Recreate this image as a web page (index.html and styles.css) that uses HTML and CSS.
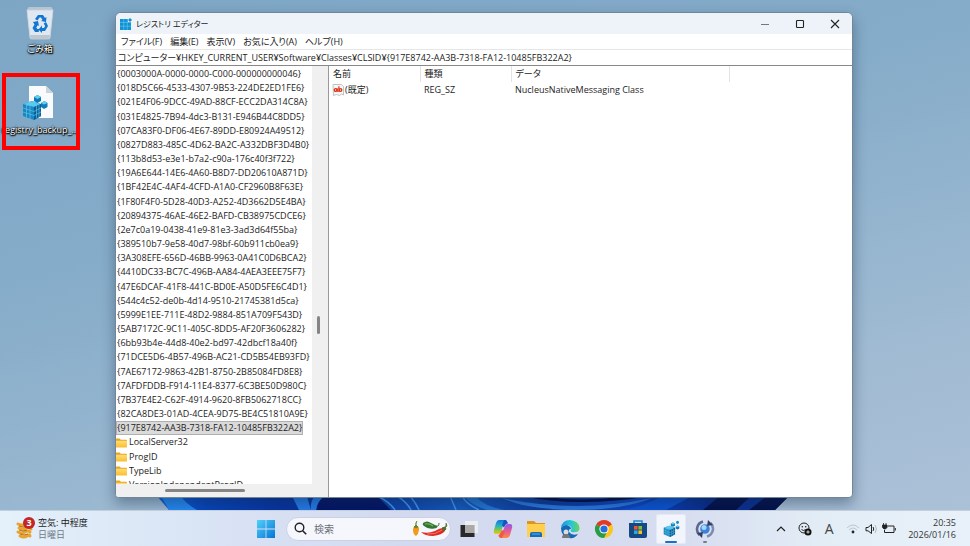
FILE: index.html
```html
<!DOCTYPE html>
<html lang="ja">
<head>
<meta charset="utf-8">
<title>レジストリ エディター</title>
<link rel="stylesheet" href="styles.css">
</head>
<body>
<svg class="defs" width="0" height="0" aria-hidden="true">
  <defs>
    <linearGradient id="folderFill" x1="0" y1="0" x2="0" y2="1"><stop offset="0" stop-color="#ffdc7a"/><stop offset="1" stop-color="#fbbf2d"/></linearGradient>
    <symbol id="cube" viewBox="0 0 24 24">
      <path d="M1 11l8-3 8 3v9l-7 4-9-4z" fill="#1686c0"/>
      <path d="M1 11l8-3 8 3-7 3z" fill="#52c3ec"/>
      <path d="M10 14l7-3v9l-7 4z" fill="#0a5f96"/>
      <path d="M4 12v9M7 13v10M1 14l9 4 7-4M1 17l9 4 7-4M12.300 13v10M14.700 12v9M6 9l8 3M12 9l-8 3" stroke="#7bd0f0" stroke-width=".5" fill="none"/>
      <path d="M11 5l3-1.500 3 1.500v3l-3 1.500L11 8z" fill="#1583bd"/><path d="M11 5l3-1.500 3 1.500-3 1.500z" fill="#63d0f4"/>
      <path d="M18 9l2.500-1.200L23 9v3l-2.500 1.500L18 12z" fill="#1174ad"/><path d="M18 9l2.500-1.200L23 9l-2.500 1.300z" fill="#63d0f4"/>
      <path d="M18.500 2l2-1 2 1v2.500l-2 1-2-1z" fill="#188dc8"/>
    </symbol>
    <symbol id="folder" viewBox="0 0 12 11">
      <path d="M0 1.500Q0 1 .6 1H4l1.200 1.500h6Q12 2.500 12 3v7q0 .8-.8.8H.8Q0 10.800 0 10z" fill="#e9a421"/>
      <path d="M0 3.500h12V10q0 .8-.8.8H.8Q0 10.800 0 10z" fill="url(#folderFill)"/>
    </symbol>
  </defs>
</svg>

<main class="desktop">
  <svg class="bloom" viewBox="0 0 632 14" preserveAspectRatio="none" aria-hidden="true">
    <defs>
      <linearGradient id="bloomBase"><stop offset="0" stop-color="#0b62df"/><stop offset=".08" stop-color="#0644ba"/><stop offset=".2" stop-color="#0733a0"/><stop offset=".3" stop-color="#08349f"/><stop offset=".48" stop-color="#1459bc"/><stop offset=".62" stop-color="#0b379a"/><stop offset=".76" stop-color="#0b45c5"/><stop offset="1" stop-color="#03104c"/></linearGradient>
    </defs>
    <path d="M0 0h632L618 14H12z" fill="url(#bloomBase)"/>
    <path d="M4 0h20q4 7 16 14H12z" fill="#2488f2"/>
    <path d="M135 0h15q2 8 4 14h-12zM158 0h10q-8 6-9 14h-5q-1-9 4-14z" fill="#247bea"/>
    <path d="M168 0h52l14 14h-74q0-9 8-14z" fill="#031567"/>
    <path d="M220 0q12 5 18 14M240 0q10 6 14 14M253 0q6 7 9 14M293 0l6 14M305 0q4 8 17 14" fill="none" stroke="#3e94ed" stroke-width="1.500"/>
    <path d="M318 0q10 11 30 14h-18Q312 8 308 0z" fill="#2374d5"/>
    <path d="M365 0q55 12 130 0h-24q-54 7-84 0z" fill="#020b43"/>
    <path d="M345 2q74 16 150 0-30 12-75 12-50 0-75-12z" fill="#2876dc"/>
    <path d="M505 0h30l-26 14h-45q25-4 41-14z" fill="#0b53d4"/>
    <path d="M563 0h69l-14 14h-72z" fill="#03104c"/>
    <path d="M594 0h16l-18 14h-13z" fill="#0b2f91"/>
  </svg>

  <nav class="shortcuts" aria-label="デスクトップ">
    <a class="shortcut" href="#trash">
      <svg class="shortcut-icon" viewBox="0 0 34 38" aria-hidden="true">
        <path d="M4 6l2-3h22l2 3-3 28q-.3 1-1.500 1h-17Q7.300 35 7 34z" fill="#dce6ef"/>
        <path d="M4 6l2-3h22l2 3z" fill="#b6c5d2"/>
        <path d="M4 6h26l-3 28q-.3 1-1.500 1h-17Q7.300 35 7 34z" fill="#dfe8f0" stroke="#c5d1dc" stroke-width=".8"/>
        <path d="M7 31h20l-.5 4h-19z" fill="#bfc8d1"/>
        <path d="M12 15l3-4h5l2 3 1.500-1-.5 5-5-1 1.500-1-1.500-2.500h-1.500l-2 3zM10 18l5-1 1 5-1.300-.8-1.400 2.300 1 1.500h1.500v3H12L9.500 24l2-3.600zM23 18l2 4-3 5h-3v2l-3.500-3.500 3.500-4V24h2l1.200-2-1.500-2.500z" fill="#1275cf"/>
      </svg>
      <span class="shortcut-label">ごみ箱</span>
    </a>
    <a class="shortcut" href="#backup">
      <svg class="shortcut-icon" viewBox="0 0 34 38" aria-hidden="true">
        <path d="M6 1h17l7 7v25H6z" fill="#f8fafb"/><path d="M23 1l7 7h-7z" fill="#ccd4da"/>
        <path d="M0 19l9-3 9 3v12l-7 4-11-4z" fill="#1788c2"/>
        <path d="M0 19l9-3 9 3-7 3z" fill="#55c7ed"/><path d="M11 22l7-3v12l-7 4z" fill="#096098"/>
        <path d="M3.500 20v12M7 21v13M0 23l11 3.500L18 23M0 27l11 3.500 7-3.500M13.500 21v12M16 20v12M5 17.500l9 3M13 17.500l-9 3" stroke="#6ccbed" stroke-width=".6" fill="none"/>
        <path d="M11 12l3.500-2 3.500 2v4l-3.500 2-3.500-2z" fill="#0e78b3"/><path d="M11 12l3.500-2 3.500 2-3.500 2z" fill="#62cef1"/>
        <path d="M18 18l3.500-2 3 2v4L21 24l-3-2z" fill="#117db8"/><path d="M18 18l3.500-2 3 2-3.500 1.500z" fill="#62cef1"/>
      </svg>
      <span class="shortcut-label">registry_backup_...</span>
    </a>
    <div class="highlight"></div>
  </nav>

  <section class="window">
    <header class="titlebar">
      <svg class="app-icon" viewBox="0 0 12 12" aria-hidden="true">
        <path d="M0 1h8v3h3v8H0z" fill="#1292d3"/><path d="M0 4.500h11M0 8.200h11M3.700 1v11M7.300 1v11" stroke="#72d5f8" stroke-width=".5"/><path d="M10 0l2 2-2 2-2-2z" fill="#168dca"/>
      </svg>
      <h1 class="title">レジストリ エディター</h1>
      <div class="window-buttons">
        <button class="window-button" aria-label="最小化"><svg viewBox="0 0 10 10"><path d="M1 5.500h8" stroke="#777"/></svg></button>
        <button class="window-button" aria-label="最大化"><svg viewBox="0 0 10 10"><rect x="1.500" y="1.500" width="7" height="7" rx=".8" fill="none" stroke="#222" stroke-width="1.100"/></svg></button>
        <button class="window-button" aria-label="閉じる"><svg viewBox="0 0 10 10"><path d="M1 1l8 8M9 1L1 9" stroke="#222" stroke-width="1.100"/></svg></button>
      </div>
    </header>
    <nav class="menubar">
      <button class="menu">ファイル(F)</button>
      <button class="menu">編集(E)</button>
      <button class="menu">表示(V)</button>
      <button class="menu">お気に入り(A)</button>
      <button class="menu">ヘルプ(H)</button>
    </nav>
    <input class="address" aria-label="アドレス" value="コンピューター¥HKEY_CURRENT_USER¥Software¥Classes¥CLSID¥{917E8742-AA3B-7318-FA12-10485FB322A2}">
    <div class="panes">
      <div class="tree">
        <div class="tree-view">
          <ul class="keys">
            <li>{0003000A-0000-0000-C000-000000000046}</li>
            <li>{018D5C66-4533-4307-9B53-224DE2ED1FE6}</li>
            <li>{021E4F06-9DCC-49AD-88CF-ECC2DA314C8A}</li>
            <li>{031E4825-7B94-4dc3-B131-E946B44C8DD5}</li>
            <li>{07CA83F0-DF06-4E67-89DD-E80924A49512}</li>
            <li>{0827D883-485C-4D62-BA2C-A332DBF3D4B0}</li>
            <li>{113b8d53-e3e1-b7a2-c90a-176c40f3f722}</li>
            <li>{19A6E644-14E6-4A60-B8D7-DD20610A871D}</li>
            <li>{1BF42E4C-4AF4-4CFD-A1A0-CF2960B8F63E}</li>
            <li>{1F80F4F0-5D28-40D3-A252-4D3662D5E4BA}</li>
            <li>{20894375-46AE-46E2-BAFD-CB38975CDCE6}</li>
            <li>{2e7c0a19-0438-41e9-81e3-3ad3d64f55ba}</li>
            <li>{389510b7-9e58-40d7-98bf-60b911cb0ea9}</li>
            <li>{3A308EFE-656D-46BB-9963-0A41C0D6BCA2}</li>
            <li>{4410DC33-BC7C-496B-AA84-4AEA3EEE75F7}</li>
            <li>{47E6DCAF-41F8-441C-BD0E-A50D5FE6C4D1}</li>
            <li>{544c4c52-de0b-4d14-9510-21745381d5ca}</li>
            <li>{5999E1EE-711E-48D2-9884-851A709F543D}</li>
            <li>{5AB7172C-9C11-405C-8DD5-AF20F3606282}</li>
            <li>{6bb93b4e-44d8-40e2-bd97-42dbcf18a40f}</li>
            <li>{71DCE5D6-4B57-496B-AC21-CD5B54EB93FD}</li>
            <li>{7AE67172-9863-42B1-8750-2B85084FD8E8}</li>
            <li>{7AFDFDDB-F914-11E4-8377-6C3BE50D980C}</li>
            <li>{7B37E4E2-C62F-4914-9620-8FB5062718CC}</li>
            <li>{82CA8DE3-01AD-4CEA-9D75-BE4C51810A9E}</li>
            <li class="selected">{917E8742-AA3B-7318-FA12-10485FB322A2}</li>
            <li><svg class="folder"><use href="#folder"/></svg>LocalServer32</li>
            <li><svg class="folder"><use href="#folder"/></svg>ProgID</li>
            <li><svg class="folder"><use href="#folder"/></svg>TypeLib</li>
            <li><svg class="folder"><use href="#folder"/></svg>VersionIndependentProgID</li>
          </ul>
        </div>
        <div class="scroll-y"><div class="thumb-y"></div></div>
        <div class="scroll-x"><div class="thumb-x"></div></div>
      </div>
      <div class="values">
        <table class="value-table">
          <thead><tr><th class="col-name">名前</th><th class="col-type">種類</th><th class="col-data">データ</th><th></th></tr></thead>
          <tbody><tr>
            <td><span class="value-name"><svg class="string-icon" viewBox="0 0 12 12" aria-hidden="true"><path d="M1 .5h8.500l2 2v8.500l-2-1-2 1.500-3-1-3 1z" fill="#f6f6f6" stroke="#b5b5b5" stroke-width=".8"/><circle cx="3.600" cy="6" r="1.300" fill="none" stroke="#dc3318" stroke-width="1.300"/><path d="M5.200 4.300v3.600M6.900 2.300v5.600" stroke="#dc3318" stroke-width="1.200"/><circle cx="8.500" cy="6" r="1.300" fill="none" stroke="#dc3318" stroke-width="1.300"/></svg>(既定)</span></td>
            <td>REG_SZ</td><td>NucleusNativeMessaging Class</td><td></td>
          </tr></tbody>
        </table>
      </div>
    </div>
  </section>
</main>

<footer class="taskbar">
  <button class="weather">
    <svg class="weather-icon" viewBox="0 0 20 24" aria-hidden="true">
      <path d="M3 7q4 2 8 0t4 0M4 11q4 2 7 0t5 1M3 15q4 2 7 0t5 0M5 19q4 2 7 0t3 0" stroke="#e9a42e" stroke-width="3" fill="none" stroke-linecap="round"/>
      <path d="M4 9q4 2 8 0M4 13q4 2 8 0M5 17q4 2 8 0" stroke="#b66d13" stroke-width="1" fill="none"/>
    </svg>
    <span class="badge">3</span>
    <span class="weather-text"><span>空気: 中程度</span><span class="muted">日曜日</span></span>
  </button>
  <div class="center">
    <button class="start" aria-label="スタート">
      <svg width="18" height="18" viewBox="0 0 18 18"><defs><linearGradient id="win" x1="0" y1="0" x2="1" y2="1"><stop offset="0" stop-color="#52d0fb"/><stop offset="1" stop-color="#0574d5"/></linearGradient></defs><path d="M0 0h8.600v8.600H0zM9.400 0H18v8.600H9.400zM0 9.400h8.600V18H0zM9.400 9.400H18V18H9.400z" fill="url(#win)"/></svg>
    </button>
    <label class="search">
      <svg class="search-icon" viewBox="0 0 13 13" aria-hidden="true"><circle cx="5.500" cy="5.500" r="4.300" fill="none" stroke="#222" stroke-width="1.400"/><path d="M8.700 8.700l3.500 3.500" stroke="#222" stroke-width="1.600"/></svg>
      <input class="search-input" type="search" placeholder="検索" aria-label="検索">
      <svg class="peppers" viewBox="0 0 36 18" aria-hidden="true">
        <path d="M4 6q3.500 0 3 4-.5 4-3 6-3-2-3-6 0-4 3-4z" fill="#f49a1a"/><path d="M2 7l2-2 2 2-2 1zM4 6q-1-3 1-5" fill="#638b2c" stroke="#638b2c"/>
        <path d="M11 3q4-3 8 0 4 2 6 3 1 2-3 2.500-6 1-10-2.500-2-1-1-3z" fill="#347632"/><path d="M13 4q4-1 8 2" stroke="#82b45e" stroke-width="1.200" fill="none"/><path d="M24 6q3 1 3-3" stroke="#347632" fill="none"/>
        <path d="M9 12q7 2 14-1 5-3 8-3 3 0 2 3-3 4-12 5-8 0-12-4z" fill="#dc2b25"/><path d="M15 14q8 1 15-4" stroke="#f87865" fill="none"/><path d="M30 8l3-1 1 2-2 2zM33 8q3-2 1-5" fill="#536e2b" stroke="#536e2b"/>
      </svg>
    </label>
    <div class="apps">
      <button class="app" aria-label="タスク ビュー"><svg viewBox="0 0 20 20"><path d="M1.500 6h14v12h-14z" fill="#292929"/><path d="M6 2h13v12H6z" fill="#f1f1f1" opacity=".85"/><path d="M6 6h9.500v8H6z" fill="#aaa"/></svg></button>
      <button class="app" aria-label="Copilot"><svg viewBox="0 0 20 20"><defs><linearGradient id="copA" x1="0" y1="0" x2="0" y2="1"><stop offset="0" stop-color="#1674df"/><stop offset=".4" stop-color="#22b1c4"/><stop offset=".7" stop-color="#82c746"/><stop offset="1" stop-color="#f3c31c"/></linearGradient><linearGradient id="copB" x1="0" y1="0" x2="0" y2="1"><stop offset="0" stop-color="#9059e7"/><stop offset=".5" stop-color="#e55a9c"/><stop offset="1" stop-color="#ff8c3e"/></linearGradient></defs>
        <path d="M6 1h6q2 0 2 3l-1-.5H11L8 13q-.5 2-3 2H3Q0 15 1 11l2-7Q4 1 6 1z" fill="url(#copA)"/><path d="M14 19H8q-2 0-3-3l2 .5h1L12 7q1-2 3-2h2q3 0 2 4l-2 7q-1 3-3 3z" fill="url(#copB)"/><path d="M11 1h1q2 0 3 3.500-2 0-3 2l-1 2-2-2z" fill="#1554c5"/><path d="M6 16q-1 3 3 3l3-6-3-2z" fill="#ed5d45"/></svg></button>
      <button class="app" aria-label="エクスプローラー"><svg viewBox="0 0 20 20"><path d="M1 2h7l2 2h9v5H1z" fill="#dc9619"/><path d="M1 5h18v13H1z" fill="#ffcf4d"/><path d="M4 18v-3q0-2 2-2h8q2 0 2 2v3z" fill="#176eb8"/><path d="M6 15h8" stroke="#5faae2"/></svg></button>
      <button class="app" aria-label="Edge"><svg viewBox="0 0 20 20"><defs><linearGradient id="edgeA"><stop offset="0" stop-color="#1898da"/><stop offset=".55" stop-color="#25c6d4"/><stop offset="1" stop-color="#6bd35b"/></linearGradient></defs><path d="M1 9Q2 1 10 1q9 1 9.500 8 0 4-4 4-4 1-5-1 1-1 1-3-1-3-5-3-3 0-5.500 3z" fill="url(#edgeA)"/><path d="M1 9q4-5 8-2 2 1 2 3-3 0-2 3 3 4 9 2-3 5-9 4-8-2-8-10z" fill="#1468b7"/><circle cx="6" cy="13" r="2.500" fill="#ddd"/><path d="M2 19q0-4 4-4t4 4z" fill="#777"/></svg></button>
      <button class="app" aria-label="Chrome"><svg viewBox="0 0 20 20"><circle cx="10" cy="10" r="9" fill="#fbc51c"/><path d="M10 10L2.200 5.500A9 9 0 0 1 17.800 5.500z" fill="#df3b2c"/><path d="M10 10L2.200 5.500A9 9 0 0 0 10 19l3.500-7z" fill="#279c4c"/><circle cx="10" cy="10" r="4.600" fill="#fff"/><circle cx="10" cy="10" r="3.600" fill="#256edb"/></svg></button>
      <button class="app" aria-label="Store"><svg viewBox="0 0 20 20"><path d="M6 5V2h8v3" fill="none" stroke="#1689cd" stroke-width="1.500"/><path d="M1 4h18v13q0 2-2 2H3q-2 0-2-2z" fill="#164981"/><path d="M6 7h3.600v3.600H6z" fill="#ee5634"/><path d="M10.400 7H14v3.600h-3.600z" fill="#82bd36"/><path d="M6 11.400h3.600V15H6z" fill="#29a8e2"/><path d="M10.400 11.400H14V15h-3.600z" fill="#f9bd27"/></svg></button>
      <button class="app active" aria-label="レジストリ エディター"><svg viewBox="0 0 20 20"><use href="#cube" x="2" y="1" width="17" height="17"/></svg></button>
      <button class="app running" aria-label="同期"><svg viewBox="0 0 20 20"><circle cx="10" cy="10" r="4.800" fill="#3b82de"/><circle cx="9" cy="8.500" r="2.500" fill="#a4d5fb"/><path d="M8 2.500A8 8 0 0 0 4.500 16" stroke="#5b6991" stroke-width="2.600" fill="none"/><path d="M2 14l6-1-1 6z" fill="#343f67"/><path d="M12 17.500A8 8 0 0 0 15.500 4" stroke="#7d8bac" stroke-width="2.600" fill="none"/><path d="M18 6l-6 1 1-6z" fill="#343f67"/></svg></button>
    </div>
  </div>
  <div class="tray">
    <button class="tray-button" aria-label="隠れているインジケーター"><svg viewBox="0 0 14 14"><path d="M3 9l4-4 4 4" fill="none" stroke="#222" stroke-width="1.200"/></svg></button>
    <button class="tray-button" aria-label="絵文字"><svg viewBox="0 0 14 14"><circle cx="6" cy="6" r="5" fill="none" stroke="#222"/><circle cx="4.300" cy="4.800" r=".8" fill="#222"/><circle cx="7.700" cy="4.800" r=".8" fill="#222"/><path d="M3.500 7.500q2 2 4 0" fill="none" stroke="#222"/><circle cx="10" cy="10" r="3.500" fill="#111"/><path d="M8.300 10h3.400M10 8.300v3.400" stroke="#fff" stroke-width=".8"/></svg></button>
    <button class="tray-button ime" aria-label="入力モード">A</button>
    <div class="status">
      <svg viewBox="0 0 14 14"><path d="M1 6q6-6 12 0M3 8q4-4 8 0" fill="none" stroke="#bcc6cf" stroke-width="1"/><circle cx="7" cy="10" r="1.400" fill="#222"/></svg>
      <svg viewBox="0 0 14 14"><path d="M2 5.500h2l3.500-3v9L4 8.800H2z" fill="none" stroke="#222"/><path d="M9 5q1.500 2 0 4" fill="none" stroke="#222"/><path d="M11 3q3 4 0 8" fill="none" stroke="#b2bbc3"/></svg>
      <svg viewBox="0 0 14 14"><path d="M5.500 4H12v6.500H2.500V8M13.300 6v2.500" fill="none" stroke="#222"/><path d="M.5 3h4.500v2.500L3.500 7h-1.500L.5 5.500zM1.500 1v2M4 1v2" fill="#222" stroke="#222" stroke-width=".8"/></svg>
    </div>
    <button class="clock"><time>20:35</time><time>2026/01/16</time></button>
  </div>
</footer>
</body>
</html>
```
FILE: styles.css
```css
* { box-sizing: border-box; }

html, body { height: 100%; }

body {
  margin: 0;
  display: grid;
  grid-template-rows: minmax(0, 1fr) 36px;
  overflow: hidden;
  font: 9px/14px "Open Sans", "Noto Sans CJK JP", sans-serif;
  color: #1c1c1c;
  font-feature-settings: "palt";
  background: linear-gradient(165deg, #7da6c5 0%, #85acc9 35%, #a1bbd3 75%, #adc2d9 100%);
}

button, input {
  font: inherit;
  font-feature-settings: inherit;
  color: inherit;
  border: 0;
  padding: 0;
  background: none;
}

button { display: flex; align-items: center; justify-content: center; }

.defs { position: absolute; }

.desktop { position: relative; }

.bloom {
  position: absolute;
  left: 157px;
  right: 181px;
  bottom: 0;
  width: calc(100% - 338px);
  height: 14px;
}

/* Desktop shortcuts */
.shortcuts { position: absolute; top: 4px; left: 0; width: 80px; }

.shortcut {
  display: flex;
  flex-direction: column;
  align-items: center;
  height: 81px;
  color: #fff;
  text-decoration: none;
}

.shortcut-icon { width: 34px; height: 38px; }

.shortcut-label {
  white-space: nowrap;
  text-shadow: 0 0 1px #000, 1px 1px 1px #000, 0 1px 2px #000, 0 0 2px #000;
}

.highlight {
  position: absolute;
  top: 69px;
  left: 2px;
  width: 78px;
  height: 77px;
  border: 4px solid #f00;
}

/* Registry window */
.window {
  position: absolute;
  top: 12px;
  right: 117px;
  bottom: 12px;
  left: 115px;
  display: flex;
  flex-direction: column;
  overflow: hidden;
  border: 1px solid #718696;
  border-radius: 6px 6px 4px 4px;
  background: #fff;
  box-shadow: 0 6px 14px rgba(20, 40, 65, .4);
}

.titlebar {
  display: flex;
  align-items: center;
  height: 21px;
  padding-left: 4px;
  background: #edf3f8;
}

.app-icon { width: 12px; height: 12px; }

.title { margin: 0 0 0 4px; font-size: 8px; font-weight: 400; }

.window-buttons { display: flex; margin-left: auto; }

.window-button { width: 35px; height: 21px; }

.window-button svg { width: 10px; height: 10px; }

.menubar {
  display: flex;
  gap: 8px;
  height: 16px;
  padding-left: 5px;
  border-bottom: 1px solid #e6e6e6;
}

.address { height: 16px; padding-left: 2px; border-bottom: 1px solid #888; }

.panes { flex: 1; min-height: 0; display: grid; grid-template-columns: 212px minmax(0, 1fr); }

.tree {
  display: grid;
  grid-template: minmax(0, 1fr) 13px / minmax(0, 1fr) 12px;
  min-height: 0;
  border-right: 4px solid #f0f0f0;
}

.tree-view { overflow: hidden; display: grid; padding-top: 1px; }

/* The last row runs past the visible area. */
.keys {
  display: grid;
  grid-auto-rows: minmax(0, 1fr);
  justify-items: start;
  margin: 0 0 -8px;
  padding: 0;
  list-style: none;
  white-space: nowrap;
}

.keys li { display: flex; align-items: center; gap: 2px; padding: 0 1px; }

.keys .selected { background: #dadada; outline: 1px solid #b0b0b0; outline-offset: -1px; }

.folder { width: 11px; height: 11px; margin-left: -1px; }

.scroll-y { grid-row: 1; grid-column: 2; background: #f0f0f0; }

.thumb-y { width: 3px; height: 18px; margin: 250px auto 0 5px; border-radius: 2px; background: #858585; }

.scroll-x { grid-column: 1 / -1; background: #f0f0f0; }

.thumb-x { width: 80px; height: 3px; margin: 5px 0 0 49px; border-radius: 2px; background: #858585; }

.values { border-left: 1px solid #999; }

.value-table { width: 100%; table-layout: fixed; border-collapse: collapse; }

.value-table th, .value-table td { padding: 0 0 0 4px; text-align: left; font-weight: 400; height: 16px; }

.value-table th { border-right: 1px solid #e3e3e3; }

.value-table th:last-child { border: 0; }

.value-table td:first-child { padding-left: 3px; }

.col-name, .col-type { width: 91px; }

.col-data { width: 218px; }

.value-name { display: flex; align-items: center; gap: 1px; }

.string-icon { width: 12px; height: 12px; }

/* Taskbar */
.taskbar {
  position: relative;
  display: grid;
  grid-template-columns: 1fr auto 1fr;
  align-items: center;
  border-top: 1px solid #c3cfdd;
  background: linear-gradient(90deg, #e4f0fa 0%, #d9e4f5 20%, #d3daf0 42%, #d6ddf0 70%, #e3edf6 85%, #e8f1f9 100%);
}

.weather { position: relative; justify-self: start; gap: 3px; padding-left: 15px; line-height: 12px; }

.weather-icon { width: 20px; height: 24px; }

.badge {
  position: absolute;
  top: 0;
  left: 23px;
  width: 12px;
  height: 12px;
  border-radius: 50%;
  background: #c42525;
  color: #fff;
  font-weight: 700;
  text-align: center;
}

.weather-text { display: flex; flex-direction: column; align-items: flex-start; }

.muted { color: #707984; }

.center { display: flex; align-items: center; width: 470px; }

.start { width: 32px; height: 32px; }

.search {
  display: flex;
  align-items: center;
  gap: 7px;
  width: 165px;
  height: 24px;
  margin: 0 3px 0 4px;
  padding: 0 2px 0 7px;
  border: 1px solid #cbd1e3;
  border-radius: 12px;
  background: #f5f7fd;
}

.search-icon { width: 13px; height: 13px; }

.search-input { flex: 1; min-width: 0; font-size: 10px; }

.search-input::placeholder { color: #6d7179; }

.peppers { width: 36px; height: 18px; }

.apps { flex: 1; display: flex; justify-content: space-between; }

.app { position: relative; width: 30px; height: 30px; border-radius: 3px; }

.app svg { width: 20px; height: 20px; }

.active { background: #f2f5fc; outline: 1px solid #e4e9f5; outline-offset: -1px; }

.active::after, .running::after {
  content: "";
  position: absolute;
  bottom: 1px;
  width: 12px;
  height: 2px;
  border-radius: 1px;
  background: #1870ca;
}

.running::after { width: 4px; background: #777d88; }

.tray { justify-self: end; display: flex; align-items: center; padding-right: 14px; }

.tray-button { width: 24px; height: 30px; }

.tray-button svg { width: 14px; height: 14px; }

.ime { font: 400 14px/18px "Open Sans", "Noto Sans", sans-serif; color: #444; }

.status { display: flex; gap: 4px; margin: 0 12px 0 5px; }

.status svg { width: 14px; height: 14px; }

.clock { flex-direction: column; align-items: flex-end; line-height: 12px; color: #333; }
```
